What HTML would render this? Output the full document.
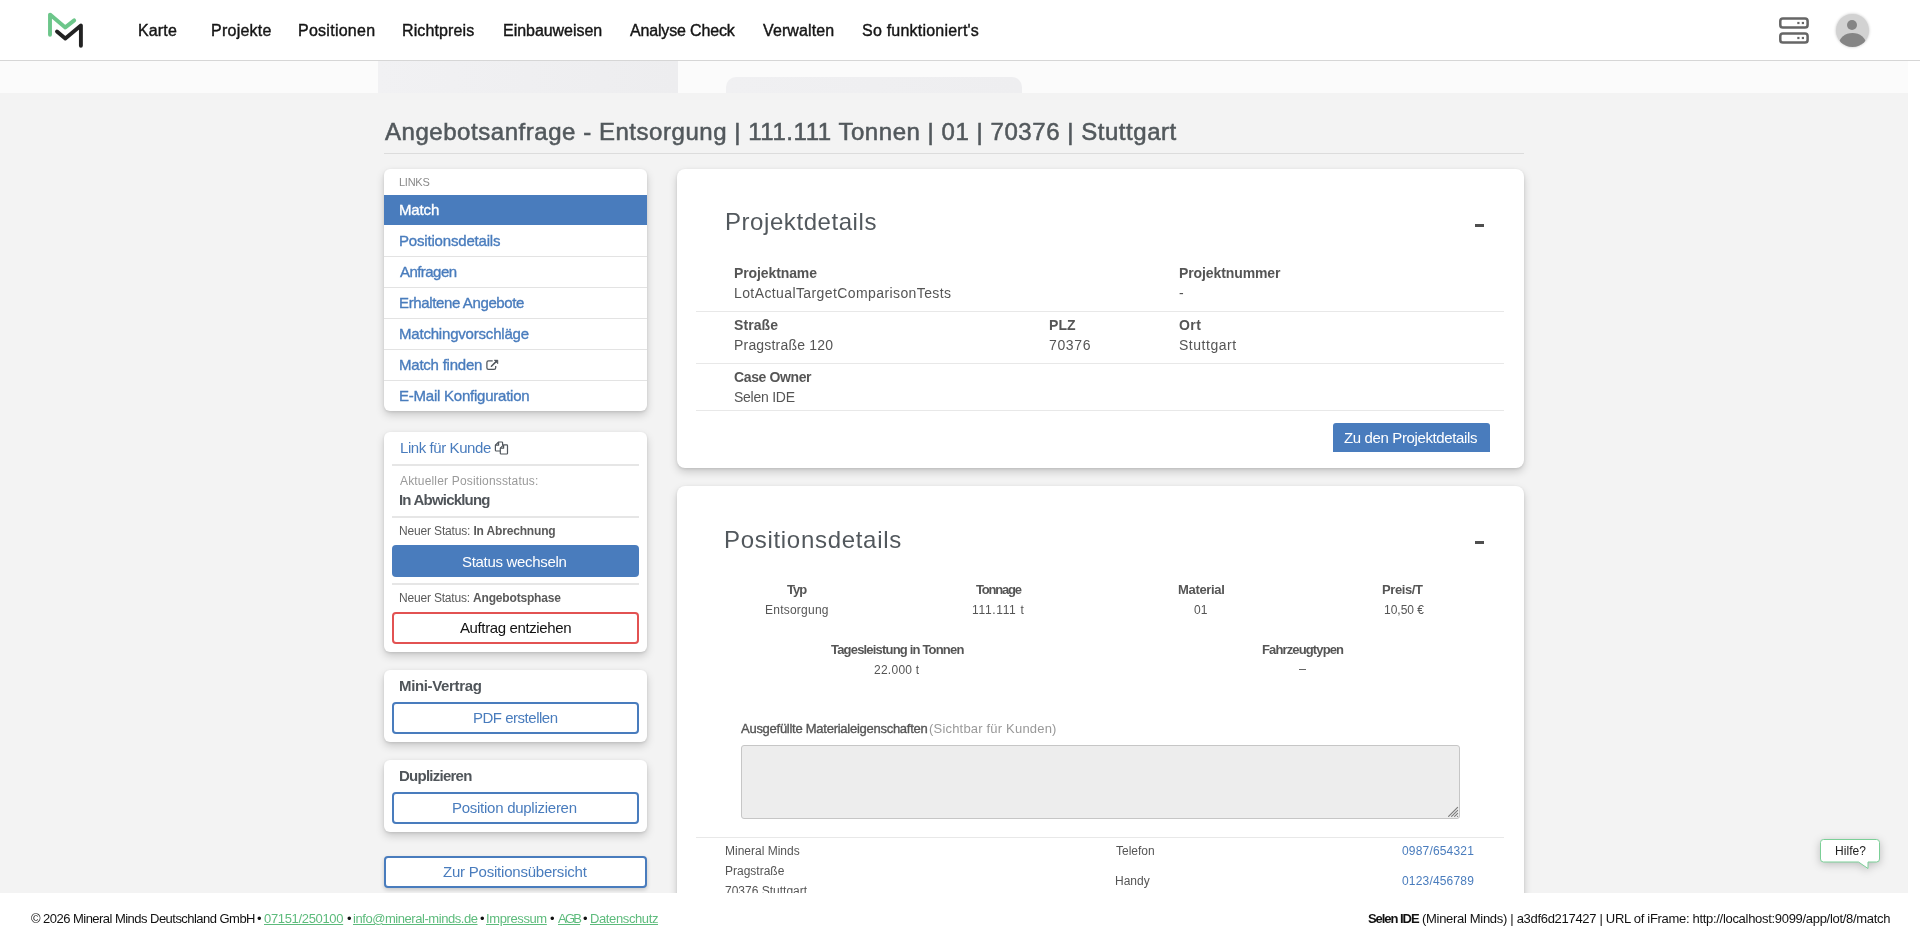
<!DOCTYPE html>
<html><head><meta charset="utf-8"><title>Match</title>
<style>
html,body{margin:0;padding:0;}
body{width:1920px;height:943px;overflow:hidden;position:relative;background:#fff;font-family:"Liberation Sans",sans-serif;}
.t{position:absolute;white-space:nowrap;will-change:transform;}
.r{position:absolute;}
svg.r{overflow:visible;}
</style></head><body>
<div class="r" style="left:0px;top:0px;width:1920px;height:60px;background:#fff;"></div>
<div class="r" style="left:0px;top:60px;width:1920px;height:1px;background:#d6d6d6;"></div>
<div class="r" style="left:0px;top:61px;width:1908px;height:32px;background:#fbfbfb;"></div>
<div class="r" style="left:378px;top:61px;width:300px;height:32px;background:linear-gradient(90deg,#f1f1f3,#ededef);"></div>
<div class="r" style="left:726px;top:77px;width:296px;height:16px;background:linear-gradient(90deg,#f0f0f2,#eeeef0);border-radius:10px 10px 0 0;"></div>
<div class="r" style="left:0px;top:93px;width:1908px;height:800px;background:#f3f3f3;"></div>
<div class="r" style="left:1908px;top:61px;width:12px;height:832px;background:#fff;"></div>
<svg class="r" style="left:30px;top:0px" width="80" height="60" viewBox="30 0 80 60">
<polyline points="50,34.7 50,14.6 65.3,27.4 74.2,20.4" fill="none" stroke="#6cc68a" stroke-width="3.9" stroke-linecap="round" stroke-linejoin="round"/>
<polyline points="57,31.6 65.3,38.5 80.9,25.5 80.9,45.8" fill="none" stroke="#222" stroke-width="3.9" stroke-linecap="round" stroke-linejoin="round"/>
</svg>
<div class="t" style="left:137.90px;top:22.85px;font-size:16px;line-height:16px;color:#151515;letter-spacing:0.150px;-webkit-text-stroke:0.4px currentColor;">Karte</div>
<div class="t" style="left:210.70px;top:22.85px;font-size:16px;line-height:16px;color:#151515;letter-spacing:0.243px;-webkit-text-stroke:0.4px currentColor;">Projekte</div>
<div class="t" style="left:298.05px;top:22.85px;font-size:16px;line-height:16px;color:#151515;letter-spacing:0.261px;-webkit-text-stroke:0.4px currentColor;">Positionen</div>
<div class="t" style="left:402.45px;top:22.85px;font-size:16px;line-height:16px;color:#151515;letter-spacing:0.117px;-webkit-text-stroke:0.4px currentColor;">Richtpreis</div>
<div class="t" style="left:502.90px;top:22.85px;font-size:16px;line-height:16px;color:#151515;letter-spacing:-0.036px;-webkit-text-stroke:0.4px currentColor;">Einbauweisen</div>
<div class="t" style="left:630.20px;top:22.85px;font-size:16px;line-height:16px;color:#151515;letter-spacing:-0.167px;-webkit-text-stroke:0.4px currentColor;">Analyse Check</div>
<div class="t" style="left:763.15px;top:22.85px;font-size:16px;line-height:16px;color:#151515;letter-spacing:0.119px;-webkit-text-stroke:0.4px currentColor;">Verwalten</div>
<div class="t" style="left:862.05px;top:22.85px;font-size:16px;line-height:16px;color:#151515;letter-spacing:0.219px;-webkit-text-stroke:0.4px currentColor;">So funktioniert's</div>
<svg class="r" style="left:1776px;top:14px" width="36" height="34" viewBox="1776 14 36 34">
<rect x="1780.3" y="18.4" width="27.3" height="9.2" rx="2.6" fill="none" stroke="#666" stroke-width="2.5"/>
<rect x="1780.3" y="33.4" width="27.3" height="9.2" rx="2.6" fill="none" stroke="#666" stroke-width="2.5"/>
<rect x="1797.3" y="21.9" width="2.2" height="2.2" fill="#666"/><rect x="1801.8" y="21.9" width="2.2" height="2.2" fill="#666"/>
<rect x="1797.3" y="36.9" width="2.2" height="2.2" fill="#666"/><rect x="1801.8" y="36.9" width="2.2" height="2.2" fill="#666"/>
</svg>
<div class="r" style="left:1835.5px;top:13.5px;width:33px;height:33px;border-radius:50%;background:#d2d2d2;box-shadow:0 0 3px rgba(0,0,0,0.25);overflow:hidden">
<div class="r" style="left:11.5px;top:6px;width:10px;height:10px;border-radius:50%;background:#858585"></div>
<div class="r" style="left:3px;top:19.5px;width:27px;height:22px;border-radius:50%;background:#858585"></div>
</div>
<div class="t" style="left:384.65px;top:119.68px;font-size:24px;line-height:24px;color:#52585c;letter-spacing:0.541px;-webkit-text-stroke:0.55px currentColor;">Angebotsanfrage - Entsorgung | 111.111 Tonnen | 01 | 70376 | Stuttgart</div>
<div class="r" style="left:384px;top:153px;width:1140px;height:1px;background:#dcdcdc;"></div>
<div class="r" style="left:384px;top:169px;width:263px;height:242px;background:#fff;border-radius:6px;box-shadow:0 4px 8px rgba(0,0,0,0.17),0 1px 3px rgba(0,0,0,0.1);"></div>
<div class="t" style="left:398.90px;top:176.69px;font-size:11px;line-height:11px;color:#8a8a8a;letter-spacing:-0.250px;">LINKS</div>
<div class="r" style="left:384px;top:195px;width:263px;height:30px;background:#497cbd;"></div>
<div class="t" style="left:398.90px;top:202.30px;font-size:15px;line-height:15px;color:#fff;letter-spacing:-0.150px;-webkit-text-stroke:0.35px currentColor;">Match</div>
<div class="t" style="left:398.90px;top:233.30px;font-size:15px;line-height:15px;color:#497cbd;letter-spacing:-0.180px;-webkit-text-stroke:0.35px currentColor;">Positionsdetails</div>
<div class="r" style="left:384px;top:256px;width:263px;height:1px;background:#e3e3e3;"></div>
<div class="t" style="left:399.60px;top:264.30px;font-size:15px;line-height:15px;color:#497cbd;letter-spacing:-0.550px;-webkit-text-stroke:0.35px currentColor;">Anfragen</div>
<div class="r" style="left:384px;top:287px;width:263px;height:1px;background:#e3e3e3;"></div>
<div class="t" style="left:398.90px;top:295.30px;font-size:15px;line-height:15px;color:#497cbd;letter-spacing:-0.374px;-webkit-text-stroke:0.35px currentColor;">Erhaltene Angebote</div>
<div class="r" style="left:384px;top:318px;width:263px;height:1px;background:#e3e3e3;"></div>
<div class="t" style="left:398.90px;top:326.30px;font-size:15px;line-height:15px;color:#497cbd;letter-spacing:-0.197px;-webkit-text-stroke:0.35px currentColor;">Matchingvorschläge</div>
<div class="r" style="left:384px;top:349px;width:263px;height:1px;background:#e3e3e3;"></div>
<div class="t" style="left:398.90px;top:357.30px;font-size:15px;line-height:15px;color:#497cbd;letter-spacing:-0.227px;-webkit-text-stroke:0.35px currentColor;">Match finden</div>
<div class="r" style="left:384px;top:380px;width:263px;height:1px;background:#e3e3e3;"></div>
<div class="t" style="left:398.90px;top:388.30px;font-size:15px;line-height:15px;color:#497cbd;letter-spacing:-0.234px;-webkit-text-stroke:0.35px currentColor;">E-Mail Konfiguration</div>
<svg class="r" style="left:480px;top:355px" width="22" height="20" viewBox="480 355 22 20">
<path d="M492.7 360.9h-4.2a1.6 1.6 0 0 0 -1.6 1.6v5.3a1.6 1.6 0 0 0 1.6 1.6h5.6a1.6 1.6 0 0 0 1.6 -1.6v-1.7" fill="none" stroke="#50565c" stroke-width="1.25"/>
<path d="M491.4 366.3L496.6 361.1" stroke="#50565c" stroke-width="1.5" stroke-linecap="round"/>
<path d="M494.1 360.1h3.8v3.8z" fill="#50565c" stroke="#50565c" stroke-width="0.5" stroke-linejoin="round"/>
</svg>
<div class="r" style="left:384px;top:432px;width:263px;height:220px;background:#fff;border-radius:6px;box-shadow:0 4px 8px rgba(0,0,0,0.17),0 1px 3px rgba(0,0,0,0.1);"></div>
<div class="t" style="left:399.70px;top:440.10px;font-size:15px;line-height:15px;color:#497cbd;letter-spacing:-0.423px;">Link für Kunde</div>
<svg class="r" style="left:490px;top:437px" width="22" height="20" viewBox="490 437 22 20">
<g fill="none" stroke="#50565c" stroke-width="1.2" stroke-linejoin="round">
<path d="M502.6 445.3V442.8a0.8 0.8 0 0 0 -0.8 -0.8H498.6L495.4 445.2V450.2a0.8 0.8 0 0 0 0.8 0.8H500.3"/>
<path d="M495.4 445.2H498.6V442"/>
<path d="M503.6 444.9H506.7a0.8 0.8 0 0 1 0.8 0.8V453.2a0.8 0.8 0 0 1 -0.8 0.8H501.1a0.8 0.8 0 0 1 -0.8 -0.8V448.2Z"/>
<path d="M500.3 448.2H503.6V444.9"/>
</g></svg>
<div class="r" style="left:392px;top:464px;width:247px;height:2px;background:#e6e6e6;"></div>
<div class="t" style="left:400.00px;top:474.84px;font-size:12px;line-height:12px;color:#9a9a9a;letter-spacing:0.170px;">Aktueller Positionsstatus:</div>
<div class="t" style="left:399.30px;top:492.10px;font-size:15px;line-height:15px;color:#50555a;letter-spacing:-0.804px;font-weight:bold;">In Abwicklung</div>
<div class="r" style="left:392px;top:516px;width:247px;height:2px;background:#e6e6e6;"></div>
<div class="t" style="left:399.30px;top:524.84px;font-size:12px;line-height:12px;color:#5a5a5a;letter-spacing:-0.163px;">Neuer Status: <b>In Abrechnung</b></div>
<div class="r" style="left:392px;top:545px;width:247px;height:32px;background:#497cbd;border-radius:4px;"></div>
<div class="t" style="left:462.45px;top:553.70px;font-size:15px;line-height:15px;color:#fff;letter-spacing:-0.311px;">Status wechseln</div>
<div class="r" style="left:392px;top:583px;width:247px;height:2px;background:#e6e6e6;"></div>
<div class="t" style="left:399.30px;top:591.84px;font-size:12px;line-height:12px;color:#5a5a5a;letter-spacing:-0.187px;">Neuer Status: <b>Angebotsphase</b></div>
<div class="r" style="left:392px;top:612px;width:247px;height:32px;border:2px solid #e25252;border-radius:4px;box-sizing:border-box;background:#fff;"></div>
<div class="t" style="left:459.60px;top:620.30px;font-size:15px;line-height:15px;color:#111;letter-spacing:-0.381px;">Auftrag entziehen</div>
<div class="r" style="left:384px;top:670px;width:263px;height:72px;background:#fff;border-radius:6px;box-shadow:0 4px 8px rgba(0,0,0,0.17),0 1px 3px rgba(0,0,0,0.1);"></div>
<div class="t" style="left:399.30px;top:678.30px;font-size:15px;line-height:15px;color:#50555a;letter-spacing:-0.345px;font-weight:bold;">Mini-Vertrag</div>
<div class="r" style="left:392px;top:702px;width:247px;height:32px;border:2px solid #497cbd;border-radius:4px;box-sizing:border-box;background:#fff;"></div>
<div class="t" style="left:472.70px;top:710.20px;font-size:15px;line-height:15px;color:#497cbd;letter-spacing:-0.483px;">PDF erstellen</div>
<div class="r" style="left:384px;top:760px;width:263px;height:72px;background:#fff;border-radius:6px;box-shadow:0 4px 8px rgba(0,0,0,0.17),0 1px 3px rgba(0,0,0,0.1);"></div>
<div class="t" style="left:399.30px;top:768.30px;font-size:15px;line-height:15px;color:#50555a;letter-spacing:-0.755px;font-weight:bold;">Duplizieren</div>
<div class="r" style="left:392px;top:792px;width:247px;height:32px;border:2px solid #497cbd;border-radius:4px;box-sizing:border-box;background:#fff;"></div>
<div class="t" style="left:452.45px;top:800.20px;font-size:15px;line-height:15px;color:#497cbd;letter-spacing:-0.266px;">Position duplizieren</div>
<div class="r" style="left:384px;top:856px;width:263px;height:32px;border:2px solid #497cbd;border-radius:4px;box-sizing:border-box;background:#fff;box-shadow:0 2px 4px rgba(0,0,0,0.18);"></div>
<div class="t" style="left:443.40px;top:864.30px;font-size:15px;line-height:15px;color:#497cbd;letter-spacing:-0.217px;">Zur Positionsübersicht</div>
<div class="r" style="left:677px;top:169px;width:847px;height:299px;background:#fff;border-radius:8px;box-shadow:0 4px 8px rgba(0,0,0,0.17),0 1px 3px rgba(0,0,0,0.1);"></div>
<div class="t" style="left:724.95px;top:210.48px;font-size:24px;line-height:24px;color:#52585d;letter-spacing:0.562px;">Projektdetails</div>
<div class="r" style="left:1475px;top:224px;width:9px;height:3px;background:#4f4f4f;"></div>
<div class="t" style="left:734.30px;top:266.15px;font-size:14px;line-height:14px;color:#555;letter-spacing:-0.105px;font-weight:bold;">Projektname</div>
<div class="t" style="left:734.30px;top:286.15px;font-size:14px;line-height:14px;color:#555;letter-spacing:0.400px;">LotActualTargetComparisonTests</div>
<div class="t" style="left:1179.30px;top:266.15px;font-size:14px;line-height:14px;color:#555;letter-spacing:-0.100px;font-weight:bold;">Projektnummer</div>
<div class="t" style="left:1179.30px;top:286.15px;font-size:14px;line-height:14px;color:#555;letter-spacing:0.000px;">-</div>
<div class="r" style="left:696px;top:311px;width:808px;height:1px;background:#e8e8e8;"></div>
<div class="t" style="left:734.30px;top:318.15px;font-size:14px;line-height:14px;color:#555;letter-spacing:0.080px;font-weight:bold;">Straße</div>
<div class="t" style="left:734.30px;top:338.15px;font-size:14px;line-height:14px;color:#555;letter-spacing:0.188px;">Pragstraße 120</div>
<div class="t" style="left:1049.30px;top:318.15px;font-size:14px;line-height:14px;color:#555;letter-spacing:0.075px;font-weight:bold;">PLZ</div>
<div class="t" style="left:1049.30px;top:338.15px;font-size:14px;line-height:14px;color:#555;letter-spacing:0.625px;">70376</div>
<div class="t" style="left:1179.30px;top:318.15px;font-size:14px;line-height:14px;color:#555;letter-spacing:0.400px;font-weight:bold;">Ort</div>
<div class="t" style="left:1179.30px;top:338.15px;font-size:14px;line-height:14px;color:#555;letter-spacing:0.525px;">Stuttgart</div>
<div class="r" style="left:696px;top:363px;width:808px;height:1px;background:#e8e8e8;"></div>
<div class="t" style="left:734.30px;top:370.15px;font-size:14px;line-height:14px;color:#555;letter-spacing:-0.378px;font-weight:bold;">Case Owner</div>
<div class="t" style="left:734.30px;top:390.15px;font-size:14px;line-height:14px;color:#555;letter-spacing:-0.256px;">Selen IDE</div>
<div class="r" style="left:696px;top:410px;width:808px;height:1px;background:#e8e8e8;"></div>
<div class="r" style="left:1333px;top:423px;width:157px;height:29px;background:#497cbd;border-radius:3px 3px 0 0;"></div>
<div class="t" style="left:1344.15px;top:430.30px;font-size:15px;line-height:15px;color:#fff;letter-spacing:-0.370px;">Zu den Projektdetails</div>
<div class="r" style="left:677px;top:486px;width:847px;height:614px;background:#fff;border-radius:8px;box-shadow:0 4px 8px rgba(0,0,0,0.17),0 1px 3px rgba(0,0,0,0.1);"></div>
<div class="t" style="left:724.30px;top:527.68px;font-size:24px;line-height:24px;color:#52585d;letter-spacing:0.697px;">Positionsdetails</div>
<div class="r" style="left:1475px;top:541px;width:9px;height:3px;background:#4f4f4f;"></div>
<div class="t" style="left:787.45px;top:583.29px;font-size:13px;line-height:13px;color:#555;letter-spacing:-1.000px;font-weight:bold;">Typ</div>
<div class="t" style="left:765.05px;top:604.04px;font-size:12px;line-height:12px;color:#555;letter-spacing:0.233px;">Entsorgung</div>
<div class="t" style="left:976.45px;top:583.29px;font-size:13px;line-height:13px;color:#555;letter-spacing:-1.192px;font-weight:bold;">Tonnage</div>
<div class="t" style="left:972.40px;top:604.04px;font-size:12px;line-height:12px;color:#555;letter-spacing:0.663px;">111.111 t</div>
<div class="t" style="left:1177.90px;top:583.29px;font-size:13px;line-height:13px;color:#555;letter-spacing:-0.321px;font-weight:bold;">Material</div>
<div class="t" style="left:1194.15px;top:604.04px;font-size:12px;line-height:12px;color:#555;letter-spacing:0.200px;">01</div>
<div class="t" style="left:1382.45px;top:583.29px;font-size:13px;line-height:13px;color:#555;letter-spacing:-0.400px;font-weight:bold;">Preis/T</div>
<div class="t" style="left:1383.50px;top:604.04px;font-size:12px;line-height:12px;color:#555;letter-spacing:-0.008px;">10,50 €</div>
<div class="t" style="left:831.35px;top:642.79px;font-size:13px;line-height:13px;color:#555;letter-spacing:-0.811px;font-weight:bold;">Tagesleistung in Tonnen</div>
<div class="t" style="left:874.40px;top:663.54px;font-size:12px;line-height:12px;color:#555;letter-spacing:0.257px;">22.000 t</div>
<div class="t" style="left:1261.70px;top:642.79px;font-size:13px;line-height:13px;color:#555;letter-spacing:-0.871px;font-weight:bold;">Fahrzeugtypen</div>
<div class="r" style="left:1299px;top:669px;width:7px;height:1px;background:#666;"></div>
<div class="t" style="left:740.55px;top:722.49px;font-size:13px;line-height:13px;color:#555;letter-spacing:-0.262px;-webkit-text-stroke:0.35px currentColor;">Ausgefüllte Materialeigenschaften</div>
<div class="t" style="left:929.40px;top:722.49px;font-size:13px;line-height:13px;color:#999;letter-spacing:0.193px;">(Sichtbar für Kunden)</div>
<div class="r" style="left:741px;top:745px;width:719px;height:74px;background:#ededed;border:1px solid #c6c6c6;border-radius:3px;box-sizing:border-box;"></div>
<svg class="r" style="left:1445px;top:804px" width="16" height="16" viewBox="1445 804 16 16">
<g stroke="#7a7a7a" stroke-width="1.1" stroke-linecap="round">
<path d="M1448.6 816.4L1457.6 807.4"/><path d="M1451.6 816.4L1457.6 810.4" stroke-dasharray="1 0.9"/>
<path d="M1454.6 816.4L1457.6 813.4" stroke-dasharray="1 0.9"/><path d="M1457.5 816.3L1457.6 816.4"/>
</g></svg>
<div class="r" style="left:696px;top:837px;width:808px;height:1px;background:#e8e8e8;"></div>
<div class="t" style="left:724.85px;top:844.54px;font-size:12px;line-height:12px;color:#555;letter-spacing:0.000px;">Mineral Minds</div>
<div class="t" style="left:724.85px;top:864.64px;font-size:12px;line-height:12px;color:#555;letter-spacing:0.000px;">Pragstraße</div>
<div class="t" style="left:724.85px;top:884.64px;font-size:12px;line-height:12px;color:#555;letter-spacing:0.000px;">70376 Stuttgart</div>
<div class="t" style="left:1115.60px;top:845.04px;font-size:12px;line-height:12px;color:#555;letter-spacing:0.000px;">Telefon</div>
<div class="t" style="left:1114.90px;top:875.24px;font-size:12px;line-height:12px;color:#555;letter-spacing:0.000px;">Handy</div>
<div class="t" style="left:1402.15px;top:845.04px;font-size:12px;line-height:12px;color:#497cbd;letter-spacing:0.175px;">0987/654321</div>
<div class="t" style="left:1402.15px;top:875.24px;font-size:12px;line-height:12px;color:#497cbd;letter-spacing:0.175px;">0123/456789</div>
<div class="r" style="left:0px;top:893px;width:1920px;height:50px;background:#fff;"></div>
<div class="t" style="left:30.65px;top:911.79px;font-size:13px;line-height:13px;color:#111;letter-spacing:-0.533px;">© 2026 Mineral Minds Deutschland GmbH</div>
<div class="t" style="left:257.15px;top:911.79px;font-size:13px;line-height:13px;color:#111;letter-spacing:0.000px;">•</div>
<div class="t" style="left:347.00px;top:911.79px;font-size:13px;line-height:13px;color:#111;letter-spacing:0.000px;">•</div>
<div class="t" style="left:480.15px;top:911.79px;font-size:13px;line-height:13px;color:#111;letter-spacing:0.000px;">•</div>
<div class="t" style="left:550.15px;top:911.79px;font-size:13px;line-height:13px;color:#111;letter-spacing:0.000px;">•</div>
<div class="t" style="left:583.15px;top:911.79px;font-size:13px;line-height:13px;color:#111;letter-spacing:0.000px;">•</div>
<div class="t" style="left:264.35px;top:911.79px;font-size:13px;line-height:13px;color:#5dbb7c;letter-spacing:-0.332px;text-decoration:underline;">07151/250100</div>
<div class="t" style="left:353.30px;top:911.79px;font-size:13px;line-height:13px;color:#5dbb7c;letter-spacing:-0.445px;text-decoration:underline;">info@mineral-minds.de</div>
<div class="t" style="left:486.40px;top:911.79px;font-size:13px;line-height:13px;color:#5dbb7c;letter-spacing:-0.387px;text-decoration:underline;">Impressum</div>
<div class="t" style="left:557.80px;top:911.79px;font-size:13px;line-height:13px;color:#5dbb7c;letter-spacing:-1.775px;text-decoration:underline;">AGB</div>
<div class="t" style="left:590.25px;top:911.79px;font-size:13px;line-height:13px;color:#5dbb7c;letter-spacing:-0.385px;text-decoration:underline;">Datenschutz</div>
<div class="t" style="left:1368.25px;top:911.59px;font-size:13px;line-height:13px;color:#111;letter-spacing:-1.050px;font-weight:bold;">Selen IDE</div>
<div class="t" style="left:1422.30px;top:911.59px;font-size:13px;line-height:13px;color:#111;letter-spacing:-0.305px;"> (Mineral Minds) | a3df6d217427 | URL of iFrame: http://localhost:9099/app/lot/8/match</div>
<svg class="r" style="left:1814px;top:834px;filter:drop-shadow(0 2px 4px rgba(0,0,0,0.22))" width="72" height="40" viewBox="1814 834 72 40">
<path d="M1823.5 839.5h53a3 3 0 0 1 3 3v16.5a3 3 0 0 1 -3 3h-8.5v6.5l-9.5 -6.5h-35a3 3 0 0 1 -3 -3v-16.5a3 3 0 0 1 3 -3z" fill="#fff" stroke="#7bcf97" stroke-width="1"/>
</svg>
<div class="t" style="left:1834.70px;top:845.04px;font-size:12px;line-height:12px;color:#222;letter-spacing:0.060px;">Hilfe?</div>
</body></html>
